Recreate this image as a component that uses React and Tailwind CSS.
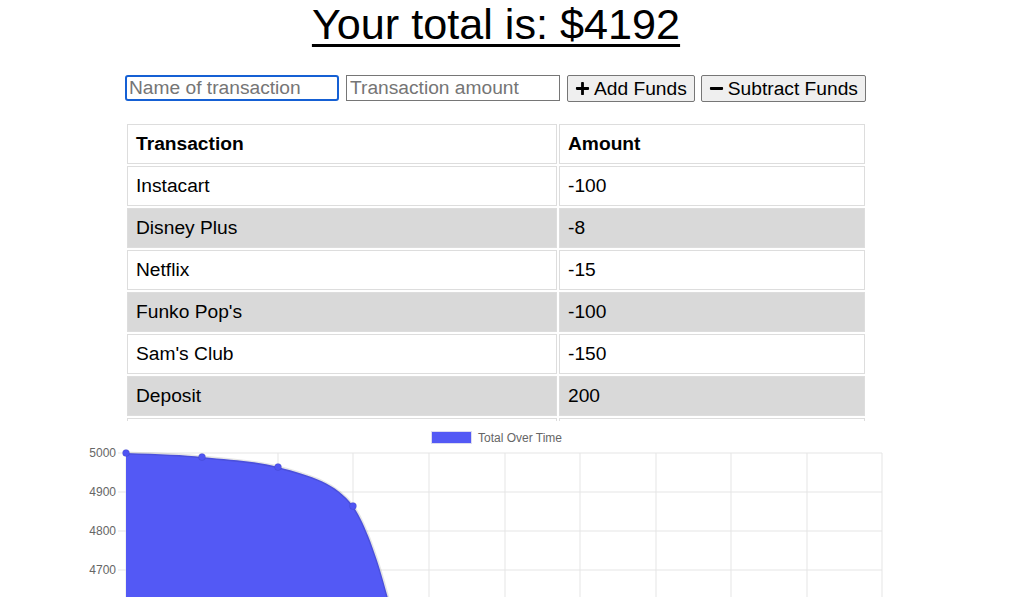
import { FaPlus, FaMinus } from "react-icons/fa";

const transactions = [
  { name: "Instacart", value: -100 },
  { name: "Disney Plus", value: -8 },
  { name: "Netflix", value: -15 },
  { name: "Funko Pop's", value: -100 },
  { name: "Sam's Club", value: -150 },
  { name: "Deposit", value: 200 },
  { name: "Target", value: -45 },
  { name: "Paycheck", value: 500 },
];

const gridX = [126, 202, 278, 353, 429, 505, 580, 656, 731, 807, 882];
const gridY = [453, 492, 531, 570];
const points = [
  [126, 453],
  [202, 457],
  [278, 467],
  [353, 506],
];

function TotalChart() {
  return (
    <svg width="992" height="176" viewBox="0 421 992 176" className="block">
      {/* grid */}
      {gridY.map((y) => (
        <line key={"h" + y} x1="118" y1={y} x2="882" y2={y} stroke="#e5e5e5" strokeWidth="1" />
      ))}
      {gridX.map((x) => (
        <line key={"v" + x} x1={x} y1="453" x2={x} y2="600" stroke="#e5e5e5" strokeWidth="1" />
      ))}
      {gridY.map((y, i) => (
        <text
          key={"l" + y}
          x="116"
          y={y + 4}
          textAnchor="end"
          fontSize="12"
          fill="#666"
          fontFamily="'Liberation Sans', Arial, sans-serif"
        >
          {5000 - i * 100}
        </text>
      ))}

      {/* legend */}
      <rect x="431.5" y="431.5" width="40" height="12" fill="#5359f5" stroke="#dcdcf0" strokeWidth="1" />
      <text x="478" y="442" fontSize="12" fill="#666" fontFamily="'Liberation Sans', Arial, sans-serif">
        Total Over Time
      </text>

      {/* area */}
      <path
        d="M126,453 C160,454 185,455 202,457 C232,460 255,461 278,467 C312,476 336,483 353,506 C364,521 380,562 392,615 L126,615 Z"
        fill="#5359f5"
      />
      <path
        d="M126,453 C160,454 185,455 202,457 C232,460 255,461 278,467 C312,476 336,483 353,506 C364,521 380,562 392,615"
        fill="none"
        stroke="rgba(0,0,0,0.1)"
        strokeWidth="3"
      />
      {points.map(([x, y]) => (
        <circle key={x} cx={x} cy={y} r="3.5" fill="#4f54f2" stroke="rgba(0,0,0,0.08)" strokeWidth="1" />
      ))}
    </svg>
  );
}

export default function App() {
  return (
    <div className="w-[992px] bg-white text-black font-['Liberation_Sans',Arial,sans-serif]">
      <h1 className="text-center text-[43.2px] leading-[48px] underline decoration-[3px] underline-offset-[5px]">
        Your total is: $4192
      </h1>

      <div className="flex items-start mt-[27px] pl-[125px] gap-[7px] text-[19.2px]">
        <input
          type="text"
          placeholder="Name of transaction"
          className="w-[214px] h-[26px] px-[2px] border-2 border-[#1560d4] rounded-[3px] outline-none placeholder:text-[#757575] leading-none"
        />
        <input
          type="number"
          placeholder="Transaction amount"
          className="w-[214px] h-[26px] px-[3px] border border-[#767676] outline-none placeholder:text-[#757575] leading-none"
        />
        <button className="flex items-center gap-[4px] h-[27px] px-[7px] bg-[#efefef] border border-[#767676] rounded-[2px] leading-none">
          <FaPlus size={15} />
          Add Funds
        </button>
        <button className="flex items-center gap-[4px] h-[27px] ml-[-1px] px-[7px] bg-[#efefef] border border-[#767676] rounded-[2px] leading-none">
          <FaMinus size={15} />
          Subtract Funds
        </button>
      </div>

      <div className="mt-[20px] h-[299px] overflow-hidden">
        <table className="ml-[125px] w-[742px] border-separate border-spacing-[2px] text-[19.2px] leading-[22px]">
          <thead>
            <tr>
              <th className="w-[430px] border border-[#dddddd] p-2 text-left font-bold">Transaction</th>
              <th className="border border-[#dddddd] p-2 text-left font-bold">Amount</th>
            </tr>
          </thead>
          <tbody>
            {transactions.map((t, i) => (
              <tr key={t.name} className={i % 2 === 1 ? "bg-[#d9d9d9]" : "bg-white"}>
                <td className="border border-[#dddddd] p-2">{t.name}</td>
                <td className="border border-[#dddddd] p-2">{t.value}</td>
              </tr>
            ))}
          </tbody>
        </table>
      </div>

      <TotalChart />
    </div>
  );
}
